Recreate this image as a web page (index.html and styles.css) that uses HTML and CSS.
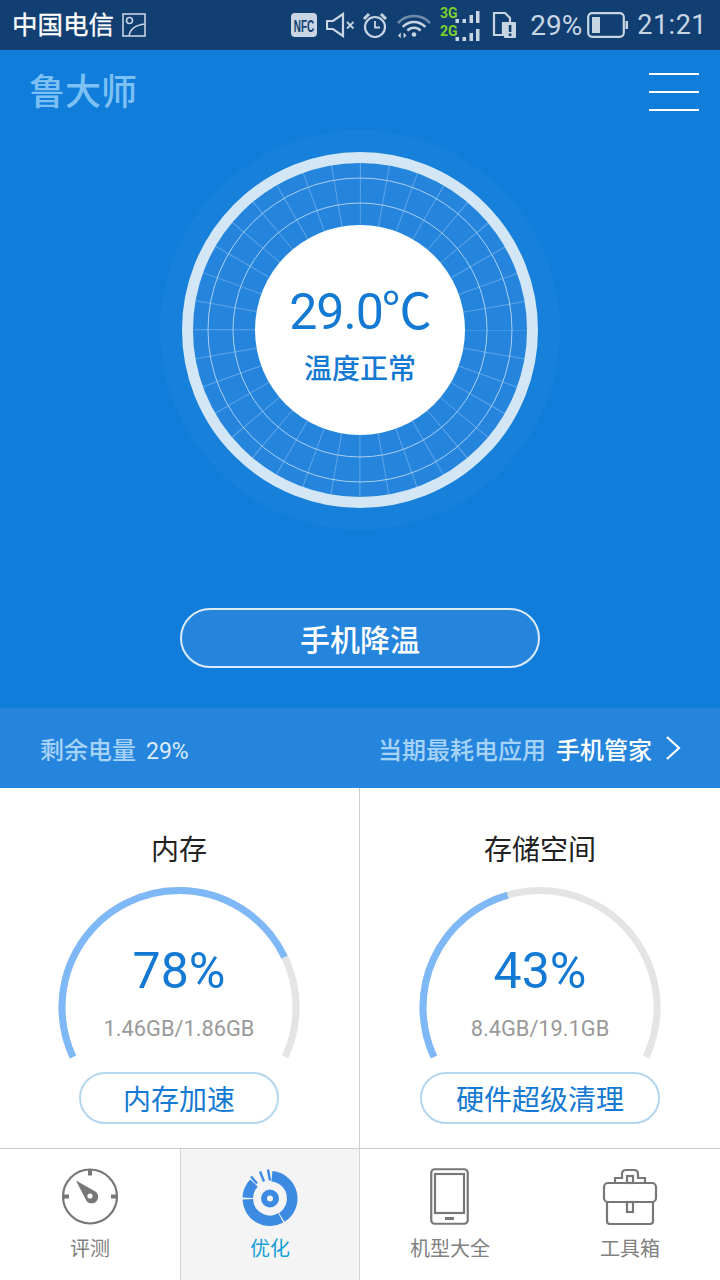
FILE: index.html
```html
<!DOCTYPE html>
<html lang="zh-CN">
  <head>
    <meta charset="UTF-8" />
    <meta name="viewport" content="width=device-width, initial-scale=1.0" />
    <title>鲁大师</title>
    <link rel="stylesheet" href="styles.css">
  </head>
  <body>
    <div class="phone">
      <!-- Android status bar -->
      <div class="status-bar">
        <div class="status-left">
          <span class="carrier">中国电信</span>
          <svg class="ic-picture" width="24" height="24" viewBox="0 0 24 24" fill="none" stroke="#c6d3e2" stroke-width="1.6">
            <rect x="1" y="1" width="22" height="22" />
            <circle cx="7.5" cy="7.5" r="3" />
            <path d="M7 23c1-7 7-11 16-12" />
          </svg>
        </div>
        <div class="status-right">
          <svg class="ic-nfc" width="26" height="24" viewBox="0 0 26 24">
            <rect width="26" height="24" rx="4" fill="#c8d5e3" />
            <text transform="translate(13 18.500) scale(0.62 1)" text-anchor="middle" class="nfc-text">NFC</text>
          </svg>
          <svg class="ic-sound" width="28" height="26" viewBox="0 0 28 26" fill="none" stroke="#c8d5e3" stroke-width="2.2">
            <path d="M1 9h6l10-7v22l-10-7H1z" />
            <path d="M21 10l6.500 6.500M27.500 10L21 16.500" stroke-width="1.8" />
          </svg>
          <svg class="ic-alarm" width="26" height="26" viewBox="0 0 26 26" fill="none" stroke="#c8d5e3" stroke-width="2.2">
            <circle cx="13" cy="15" r="10" />
            <path d="M13 9v6.500h5" stroke-width="1.8" />
            <path d="M2 7l5-5M24 7l-5-5" stroke-width="3" />
          </svg>
          <svg class="ic-wifi" width="34" height="28" viewBox="0 0 36 28" fill="none" stroke="#c8d5e3" stroke-width="2.600">
            <path d="M1 12C10 2 26 2 35 12" stroke="#6f8aaa" />
            <path d="M6 16c7-7 17-7 24 0" />
            <path d="M11 20c4-4 10-4 14 0" />
            <circle cx="18" cy="24" r="2.400" fill="#c8d5e3" stroke="none" />
            <path d="M4 22l-3 3 3 3zM7 22l3 3-3 3z" fill="#c8d5e3" stroke="none" />
          </svg>
          <svg class="ic-signal" width="40" height="36" viewBox="0 0 40 36">
            <text x="0" y="11" class="net-text">3G</text>
            <text x="0" y="29" class="net-text">2G</text>
            <g fill="#c8d5e3">
              <rect x="15.500" y="12" width="3.500" height="4" />
              <rect x="22.500" y="12" width="3.500" height="4" />
              <rect x="29.500" y="8" width="3.500" height="8" />
              <rect x="36" y="4" width="3.500" height="12" />
              <rect x="15.500" y="30" width="3.500" height="4" />
              <rect x="22.500" y="30" width="3.500" height="4" />
              <rect x="29.500" y="26" width="3.500" height="8" />
              <rect x="36" y="22" width="3.500" height="12" />
            </g>
          </svg>
          <svg class="ic-sim" width="24" height="26" viewBox="0 0 24 26">
            <path d="M2 1h11l5 5v5h-7v12H2z" fill="none" stroke="#c8d5e3" stroke-width="2.200" />
            <rect x="12" y="10" width="12" height="16" rx="1" fill="#c8d5e3" />
            <rect x="16.800" y="13" width="2.600" height="7" fill="#123f72" />
            <rect x="16.800" y="21.500" width="2.600" height="2.600" fill="#123f72" />
          </svg>
          <span class="battery-text">29%</span>
          <svg class="ic-battery" width="41" height="26" viewBox="0 0 41 26">
            <rect x="1.200" y="1.200" width="35.600" height="23.600" rx="4" fill="none" stroke="#c8d5e3" stroke-width="2.200" />
            <rect x="5" y="5" width="8" height="16" fill="#c8d5e3" />
            <rect x="38.500" y="9" width="2.500" height="8" fill="#c8d5e3" />
          </svg>
          <span class="clock">21:21</span>
        </div>
      </div>

      <section class="hero">
        <header class="top-bar">
          <span class="logo">鲁大师</span>
          <div class="menu-btn">
            <span></span>
            <span></span>
            <span></span>
          </div>
        </header>

        <!-- Temperature dial -->
        <div class="dial">
          <svg class="dial-art" width="400" height="400" viewBox="0 0 400 400" fill="none">
            <circle cx="200" cy="200" r="200" fill="#1680da" />
            <circle cx="200" cy="200" r="167" fill="#2585dd" />
            <circle cx="200" cy="200" r="136" stroke="#5ea4e8" stroke-width="62" stroke-dasharray="1 22.740" stroke-dashoffset="0.500" />
            <circle cx="200" cy="200" r="152" stroke="#a9d0f2" stroke-width="1" />
            <circle cx="200" cy="200" r="127" stroke="#a9d0f2" stroke-width="1" />
            <circle cx="200" cy="200" r="172.500" stroke="#d3e6f6" stroke-width="11" />
            <circle cx="200" cy="200" r="105" fill="#fff" />
          </svg>
          <div class="dial-text">
            <div class="temp">29.0<span class="temp-unit">℃</span></div>
            <div class="temp-state">温度正常</div>
          </div>
        </div>

        <button class="cool-btn">手机降温</button>
      </section>

      <div class="power-bar">
        <div class="power-left">
          <span class="power-label">剩余电量</span>
          <span class="power-value">29%</span>
        </div>
        <div class="power-right">
          <span class="power-label">当期最耗电应用</span>
          <span class="power-app">手机管家</span>
          <svg class="chevron" width="16" height="26" viewBox="0 0 16 26" fill="none" stroke="#fff" stroke-width="2.200">
            <path d="M2 2l12 11L2 24" />
          </svg>
        </div>
      </div>

      <div class="cards">
        <div class="card card-left">
          <h2 class="card-title">内存</h2>
          <div class="ring">
            <svg class="ring-art" width="242" height="182" viewBox="0 0 242 182" fill="none" stroke-width="7">
              <path class="ring-track" d="M14.960 169.950A117 117 0 1 1 227.040 169.950" />
              <path class="ring-fill" pathLength="100" stroke-dasharray="78 100" d="M14.960 169.950A117 117 0 1 1 227.040 169.950" />
            </svg>
            <div class="ring-text">
              <div class="ring-percent">78%</div>
              <div class="ring-size">1.46GB/1.86GB</div>
            </div>
          </div>
          <button class="card-btn btn-short">内存加速</button>
        </div>
        <div class="card">
          <h2 class="card-title">存储空间</h2>
          <div class="ring">
            <svg class="ring-art" width="242" height="182" viewBox="0 0 242 182" fill="none" stroke-width="7">
              <path class="ring-track" d="M14.960 169.950A117 117 0 1 1 227.040 169.950" />
              <path class="ring-fill" pathLength="100" stroke-dasharray="43 100" d="M14.960 169.950A117 117 0 1 1 227.040 169.950" />
            </svg>
            <div class="ring-text">
              <div class="ring-percent">43%</div>
              <div class="ring-size">8.4GB/19.1GB</div>
            </div>
          </div>
          <button class="card-btn btn-long">硬件超级清理</button>
        </div>
      </div>

      <!-- Bottom tabs -->
      <nav class="tabs">
        <div class="tab">
          <svg width="60" height="60" viewBox="0 1.500 60 60" fill="none" stroke="#777" stroke-width="2.200">
            <circle cx="30" cy="30" r="27" />
            <path d="M30 3v6M3 30h6M57 30h-6" stroke-width="4" />
            <path d="M16 14l18.500 10.500a6.500 6.500 0 1 1-9 8z" fill="#777" stroke="none" />
            <circle cx="30" cy="29.500" r="2.600" fill="#fff" stroke="none" />
          </svg>
          <span class="tab-label">评测</span>
        </div>
        <div class="tab tab-active">
          <svg width="60" height="60" viewBox="-30 -30.500 60 60" fill="none" stroke="#3d8ae2">
            <path stroke-width="10.500" d="M1.940-22.170A22.250 22.250 0 0 1 11.790 18.870" />
            <path stroke-width="10.500" d="M10.790 19.460A22.250 22.250 0 0 1-22.240 0.780" />
            <path stroke-width="10.500" d="M-22.240-0.780A22.250 22.250 0 0 1-16-15.460" />
            <path stroke-width="2.400" d="M-19-22l6 7M-10-27l4 10M-2-29l2 11" />
            <circle r="6" stroke-width="6" />
          </svg>
          <span class="tab-label">优化</span>
        </div>
        <div class="tab">
          <svg width="60" height="60" viewBox="0 0 60 60" fill="none" stroke="#777" stroke-width="2.200">
            <rect x="11.250" y="1.250" width="36.500" height="54.500" rx="3.500" />
            <rect x="15" y="6" width="29" height="39" />
            <path d="M25 50.500h9" stroke-width="3" />
          </svg>
          <span class="tab-label">机型大全</span>
        </div>
        <div class="tab">
          <svg width="60" height="60" viewBox="0 0 60 60" fill="none" stroke="#777" stroke-width="2.200">
            <path d="M15 15V10h7V6q0-4 4-4h8q4 0 4 4v4h7v5" />
            <rect x="27" y="8" width="6" height="7" />
            <rect x="4" y="15" width="52" height="19" rx="4" />
            <path d="M7 34v19q0 3 3 3h40q3 0 3-3V34" />
            <rect x="27" y="34" width="6" height="10" />
          </svg>
          <span class="tab-label">工具箱</span>
        </div>
      </nav>
    </div>
  </body>
</html>
```

FILE: styles.css
```css
* {
  box-sizing: border-box;
}

body {
  margin: 0;
  background-color: #fff;
  font-family: Roboto, "Noto Sans CJK SC", sans-serif;
}

button {
  font-family: inherit;
  padding: 0;
  cursor: pointer;
}

.phone {
  width: 720px;
  height: 1280px;
  display: flex;
  flex-direction: column;
  overflow: hidden;
}

/* Status bar */
.status-bar {
  height: 50px;
  background-color: #123f72;
  display: flex;
  justify-content: space-between;
  align-items: center;
  padding: 0 13px 0 12px;
  color: #c8d5e5;
}

.status-left,
.status-right {
  display: flex;
  align-items: center;
}

.carrier {
  font-size: 25.500px;
  color: #fff;
  line-height: 50px;
  -webkit-text-stroke: 0.3px #fff;
}

.ic-picture {
  margin-left: 8px;
}

.ic-sound {
  margin-left: 9px;
}

.ic-alarm {
  margin-left: 8px;
}

.ic-wifi {
  margin-left: 9px;
}

.ic-signal {
  margin-left: 9px;
  overflow: visible;
}

.ic-sim {
  margin-left: 12px;
}

.nfc-text {
  font-family: "Liberation Sans", sans-serif;
  font-size: 16px;
  font-weight: 700;
  fill: #123f72;
}

.net-text {
  font-family: Roboto, sans-serif;
  font-size: 14px;
  font-weight: 700;
  fill: #7ed02c;
}

.battery-text {
  margin-left: 14px;
  font-size: 28px;
}

.ic-battery {
  margin-left: 5px;
}

.clock {
  margin-left: 9px;
  font-size: 27px;
  letter-spacing: 0.5px;
}

/* Blue top section */
.hero {
  height: 658px;
  background-color: #0f7dd9;
  display: flex;
  flex-direction: column;
  align-items: center;
}

.top-bar {
  width: 100%;
  height: 80px;
  padding: 23px 21px 0 29px;
  display: flex;
  justify-content: space-between;
  align-items: flex-start;
}

.logo {
  margin-top: 1px;
  font-size: 36px;
  font-weight: 500;
  line-height: 38px;
  color: #7cc0f5;
}

.menu-btn {
  width: 50px;
  display: flex;
  flex-direction: column;
  gap: 16px;
}

.menu-btn span {
  height: 2px;
  background-color: #fff;
}

.dial {
  width: 400px;
  height: 400px;
  display: grid;
}

.dial-art,
.dial-text {
  grid-area: 1 / 1;
}

.dial-text {
  display: flex;
  flex-direction: column;
  align-items: center;
  padding-top: 142px;
  color: #1479d2;
}

.temp {
  font-size: 50px;
  letter-spacing: -1px;
  line-height: 70px;
  white-space: nowrap;
}

.temp-unit {
  font-family: "Noto Sans CJK SC", sans-serif;
  font-size: 50px;
  margin-left: -1px;
}

.temp-state {
  font-size: 28px;
  font-weight: 500;
  line-height: 40px;
  margin-top: 3px;
}

.cool-btn {
  margin-top: 78px;
  width: 360px;
  height: 60px;
  border: 2px solid #dcebfa;
  border-radius: 30px;
  background-color: #2585dd;
  color: #fff;
  font-size: 30px;
  font-weight: 500;
}

/* Battery summary strip */
.power-bar {
  height: 80px;
  background-color: #2585dd;
  display: flex;
  justify-content: space-between;
  align-items: center;
  padding: 0 39px 0 40px;
  font-size: 24px;
  font-weight: 500;
  color: #fff;
}

.power-left {
  display: flex;
  align-items: baseline;
}

.power-right {
  display: flex;
  align-items: center;
}

.power-label {
  color: #a6d3f8;
}

.power-value {
  margin-left: 10px;
  font-size: 23px;
  font-weight: 400;
  color: #dcecfb;
}

.power-app {
  margin-left: 10px;
}

.chevron {
  margin-left: 13px;
}

/* Memory and storage cards */
.cards {
  height: 360px;
  display: flex;
}

.card {
  width: 360px;
  display: flex;
  flex-direction: column;
  align-items: center;
  padding-top: 42px;
}

.card-left {
  border-right: 1px solid #ccc;
  padding-right: 1px;
}

.card-title {
  margin: 0;
  font-size: 28px;
  font-weight: 400;
  line-height: 42px;
  color: #222;
}

.ring {
  margin-top: 15px;
  width: 242px;
  height: 185px;
  display: grid;
  justify-items: center;
}

.ring-art,
.ring-text {
  grid-area: 1 / 1;
}

.ring-text {
  text-align: center;
  padding-top: 54px;
}

.ring-track {
  stroke: #e4e4e4;
}

.ring-fill {
  stroke: #7eb8f6;
}

.ring-percent {
  font-size: 50px;
  line-height: 60px;
  color: #1479d2;
}

.ring-size {
  margin-top: 13px;
  font-size: 21.800px;
  line-height: 30px;
  color: #999;
}

.card-btn {
  height: 52px;
  border: 2px solid #b4d6ee;
  border-radius: 26px;
  background-color: #fff;
  color: #1479d2;
  font-size: 28px;
}

.btn-short {
  width: 200px;
}

.btn-long {
  width: 240px;
}

/* Tab bar */
.tabs {
  height: 132px;
  border-top: 1px solid #ccc;
  display: flex;
}

.tab {
  width: 180px;
  display: flex;
  flex-direction: column;
  align-items: center;
  padding-top: 19px;
}

.tab-active {
  background-color: #f4f4f4;
  border-left: 1px solid #d4d4d4;
  border-right: 1px solid #d4d4d4;
}

.tab-label {
  font-size: 20px;
  line-height: 30px;
  margin-top: 6px;
  color: #808080;
}

.tab-active .tab-label {
  color: #15a0d8;
}
```
